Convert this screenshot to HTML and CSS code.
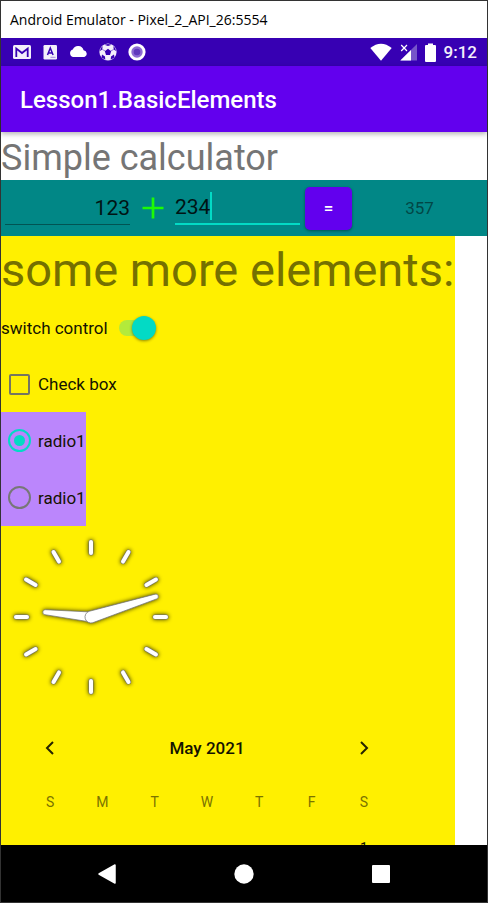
FILE: index.html
```html
<!DOCTYPE html>
<html lang="en">
<head>
<meta charset="utf-8">
<meta name="viewport" content="width=device-width, initial-scale=1">
<title>Android Emulator - Pixel_2_API_26:5554</title>
<link rel="stylesheet" href="styles.css">
</head>
<body>
<div class="window">
  <div class="window-title">Android Emulator - Pixel_2_API_26:5554</div>

  <div class="status-bar">
    <div class="notifications">
      <svg width="18" height="16" viewBox="0 0 18 16"><rect y="1" width="18" height="14" rx="1.5" fill="#f3effb"/><path d="M3.300 13V4.500L9 9l5.700-4.500V13" fill="none" stroke="#3700b3" stroke-width="1.800"/></svg>
      <svg width="16" height="16" viewBox="-1.500 0 16 16"><rect y="1" width="13.500" height="14.500" rx="1.200" fill="#f3effb"/><path d="M4 11l2.800-7L9.600 11M5 8.900h3.700" fill="none" stroke="#3700b3" stroke-width="1.500"/><path d="M7 13.300h5" stroke="#a58bdc"/></svg>
      <svg width="19" height="16" viewBox="0 0 19 16"><path d="M4 13A3.900 3.900 0 0 1 3.800 5.500 5.700 5.700 0 0 1 14.600 6.200 3.500 3.500 0 0 1 15.300 13z" fill="#fff"/></svg>
      <svg width="18" height="18" viewBox="0 0 18 18"><circle cx="9" cy="9" r="8.600" fill="#f3effb"/><g fill="#3700b3"><path d="M9 5.800l3.200 2.400L11 12H7L5.800 8.200z"/><path d="M5.300 1.700L9 3l3.700-1.300L9 .9zM1 8l2.300-1.500L3.600 3 1.700 5.200zM17 8l-2.300-1.500L14.400 3l1.900 2.200zM2.500 14.500l.5-3 3 2 .3 3.200zM15.500 14.500l-.5-3-3 2-.3 3.200z"/></g><path d="M3.300 6.500l3 1.500M14.700 6.500l-3 1.500" fill="none" stroke="#3700b3" stroke-width=".5"/></svg>
      <svg width="18" height="18" viewBox="0 0 18 18"><circle cx="9" cy="9" r="8.600" fill="#fff"/><circle cx="9" cy="9" r="5.700" fill="#8c6ad3"/><circle cx="9" cy="9" r="3.300" fill="#6039bd"/></svg>
    </div>
    <div class="indicators">
      <svg width="22" height="18" viewBox="0 0 22 18"><path d="M.3 5Q11-3.500 21.700 5L11 17.700z" fill="#fff"/></svg>
      <svg width="17" height="18" viewBox="0 0 17 18"><path d="M17 1v16.500H.3z" fill="#7655c9"/><path d="M11 7v10.500H.3z" fill="#fff"/><path d="M0 0h8.500v8.500L7 10H0z" fill="#3700b3"/><path d="M1.200 2l5.800 6M7 2L1.200 8" stroke="#fff" stroke-width="1.200"/></svg>
      <svg width="11" height="19" viewBox="0 0 11 19"><path d="M3 .5h5V2h2a1 1 0 0 1 1 1v15a1 1 0 0 1-1 1H1a1 1 0 0 1-1-1V3a1 1 0 0 1 1-1h2z" fill="#fff"/></svg>
      <span class="time">9:12</span>
    </div>
  </div>

  <header class="app-bar"><h1>Lesson1.BasicElements</h1></header>

  <main class="content">
    <h2 class="calc-title">Simple calculator</h2>
    <form class="calculator">
      <div class="field"><input class="first" type="text" value="123" aria-label="First number"></div>
      <svg class="plus" width="22" height="22" viewBox="0 0 22 22"><path d="M11 .5v21M.5 11h21" stroke="#1dfb04" stroke-width="2.700"/></svg>
      <div class="field"><input class="second" type="text" value="234" aria-label="Second number"><span class="caret"></span></div>
      <button class="equals" type="button">=</button>
      <output class="result">357</output>
    </form>

    <section class="panel">
      <h2 class="panel-title">some more elements:</h2>
      <label class="row switch-row">switch control <input class="switch" type="checkbox" role="switch" checked></label>
      <label class="row option"><input class="check" type="checkbox"> Check box</label>
      <div class="radio-group" role="radiogroup">
        <label class="row option"><input class="radio" type="radio" name="choice" checked> radio1</label>
        <label class="row option"><input class="radio" type="radio" name="choice"> radio1</label>
      </div>

      <svg class="clock" width="180" height="182" viewBox="-90 -91 180 182">
        <defs>
          <path id="tick" d="M0-75v11"/>
          <g id="dial"><use href="#tick"/><use href="#tick" transform="rotate(30)"/><use href="#tick" transform="rotate(60)"/><use href="#tick" transform="rotate(90)"/><use href="#tick" transform="rotate(120)"/><use href="#tick" transform="rotate(150)"/><use href="#tick" transform="rotate(180)"/><use href="#tick" transform="rotate(210)"/><use href="#tick" transform="rotate(240)"/><use href="#tick" transform="rotate(270)"/><use href="#tick" transform="rotate(300)"/><use href="#tick" transform="rotate(330)"/></g>
        </defs>
        <use class="ticks-edge" href="#dial"/>
        <use class="ticks" href="#dial"/>
        <path class="hand" transform="rotate(276)" d="M-5 0L-2.500-46a2.500 2.500 0 0 1 5 0L5 0A5 5 0 0 1-5 0z"/>
        <path class="hand" transform="rotate(72.500)" d="M-6 0L-2.500-68a2.500 2.500 0 0 1 5 0L6 0A6 6 0 0 1-6 0z"/>
      </svg>

      <div class="calendar">
        <div class="month-bar">
          <button type="button" aria-label="Previous month"><svg width="10" height="14" viewBox="0 0 10 14"><path d="M8 1L2 7l6 6" fill="none" stroke="#262400" stroke-width="2"/></svg></button>
          <span class="month">May 2021</span>
          <button type="button" aria-label="Next month"><svg width="10" height="14" viewBox="0 0 10 14"><path d="M2 1l6 6-6 6" fill="none" stroke="#262400" stroke-width="2"/></svg></button>
        </div>
        <table>
          <thead><tr><th>S</th><th>M</th><th>T</th><th>W</th><th>T</th><th>F</th><th>S</th></tr></thead>
          <tbody><tr><td></td><td></td><td></td><td></td><td></td><td></td><td>1</td></tr></tbody>
        </table>
      </div>
    </section>
  </main>

  <nav class="nav-bar">
    <button type="button" aria-label="Back"><svg width="20" height="20" viewBox="0 0 20 20"><path d="M18 1v18L2 10z" fill="#fff" stroke="#fff" stroke-width="1.500" stroke-linejoin="round"/></svg></button>
    <button type="button" aria-label="Home"><svg width="20" height="20" viewBox="0 0 20 20"><circle cx="10" cy="10" r="9.700" fill="#fff"/></svg></button>
    <button type="button" aria-label="Overview"><svg width="20" height="20" viewBox="0 0 20 20"><rect x="1" y="1" width="18" height="18" rx="1" fill="#fff"/></svg></button>
  </nav>
</div>
</body>
</html>
```
FILE: styles.css
```css
* { box-sizing: border-box; }

body {
  margin: 0;
  font-family: Roboto, "Noto Sans", sans-serif;
  font-size: 17px;
  color: #141300;
}

h1, h2 { margin: 0; font-weight: 400; }

button {
  padding: 0;
  border: 0;
  background: none;
  font: inherit;
}

svg { display: block; }

.window {
  display: flex;
  flex-direction: column;
  height: 100vh;
  border: 1px solid #333;
  background: #fff;
}

.window-title {
  padding: 0 9px;
  font-family: "Open Sans", "Noto Sans", sans-serif;
  font-size: 14px;
  line-height: 37px;
  color: #000;
}

/* Status bar */
.status-bar {
  display: flex;
  justify-content: space-between;
  align-items: center;
  height: 28px;
  padding: 0 10px 0 12px;
  background: #3700b3;
}

.notifications, .indicators { display: flex; align-items: center; }
.notifications { gap: 11px; }
.indicators { gap: 8px; }

.time {
  font-weight: 500;
  color: #f3effb;
}

.app-bar {
  position: relative;
  padding: 2px 19px 0;
  background: #6200ee;
  box-shadow: 0 2px 5px rgba(0, 0, 0, .3);
}

.app-bar h1 {
  font-size: 24px;
  font-weight: 500;
  line-height: 64px;
  color: #fff;
}

.content {
  flex: 1;
  min-height: 0;
  overflow: hidden;
}

/* Calculator */
.calc-title {
  padding-top: 4px;
  font-size: 36px;
  line-height: 44px;
  color: #757575;
}

.calculator {
  display: grid;
  grid-template-columns: minmax(0, 133fr) 37px minmax(0, 133fr) 48px minmax(0, 135fr);
  align-items: center;
  height: 56px;
  background: #018786;
}

.field { position: relative; padding: 0 4px; }

.field input {
  display: block;
  width: 100%;
  height: 34px;
  padding: 0;
  border: 0;
  border-radius: 0;
  outline: 0;
  background: none;
  font: inherit;
  font-size: 21px;
  color: #001414;
}

.field .first { text-align: right; border-bottom: 1px solid #015453; }
.field .second { border-bottom: 2px solid #03dac5; }

.caret {
  position: absolute;
  top: 1px;
  left: 39px;
  width: 2px;
  height: 28px;
  background: #03dac5;
}

.plus { justify-self: center; }

.equals {
  height: 43px;
  margin-left: 1px;
  border-radius: 5px;
  background: #6200ee;
  box-shadow: 0 1px 3px rgba(0, 0, 0, .4);
  font-weight: 500;
  color: #fff;
}

.result { text-align: center; color: #014746; }

/* Controls */
.panel {
  width: fit-content;
  padding-right: 1px;
  background: #fff000;
}

.panel-title {
  padding-top: 4px;
  font-size: 47px;
  line-height: 60px;
  color: #757000;
}

.row {
  display: flex;
  align-items: center;
  height: 56px;
}

.option { gap: 7px; padding-left: 7px; }

.row input { appearance: none; margin: 0; }

.switch-row { gap: 11px; }

.switch {
  position: relative;
  width: 37px;
  height: 24px;
}

.switch::before {
  content: "";
  position: absolute;
  inset: 4px 4px 4px 0;
  border-radius: 8px;
  background: #b3ea3b;
}

.switch::after {
  content: "";
  position: absolute;
  top: 0;
  right: 0;
  width: 24px;
  height: 24px;
  border-radius: 50%;
  background: #03dac5;
  box-shadow: 0 1px 3px rgba(0, 0, 0, .45);
}

.row .check {
  width: 21px;
  height: 21px;
  margin: 0 1px;
  border: 2px solid #757561;
  border-radius: 2px;
}

.radio-group {
  width: fit-content;
  background: #bb86fc;
}

.radio-group .row { height: 57px; }

.radio {
  display: grid;
  place-items: center;
  width: 23px;
  height: 23px;
  border: 2px solid #777;
  border-radius: 50%;
}

.radio:checked { border-color: #03dac5; }

.radio:checked::before {
  content: "";
  width: 11px;
  height: 11px;
  border-radius: 50%;
  background: #03dac5;
}

/* Clock */
.clock { filter: drop-shadow(0 0 2px rgba(0, 0, 0, .8)); }
.ticks-edge { stroke: #777; stroke-width: 5; stroke-linecap: round; }
.ticks { stroke: #fff; stroke-width: 4; stroke-linecap: round; }
.hand { fill: #fff; stroke: #777; stroke-width: .7; }

/* Calendar */
.calendar {
  width: 366px;
  margin-left: 23px;
}

.month-bar {
  display: flex;
  justify-content: space-between;
  align-items: center;
  height: 80px;
}

.month-bar button {
  display: grid;
  place-items: center;
  width: 52px;
  height: 52px;
}

.month { font-weight: 500; }

.calendar table {
  width: 100%;
  table-layout: fixed;
  border-collapse: collapse;
  text-align: center;
}

.calendar th, .calendar td { padding: 0; }

.calendar th {
  height: 28px;
  font-size: 14px;
  font-weight: 400;
  color: #7a7300;
}

.calendar td {
  height: 64px;
  font-size: 14px;
}

/* System navigation */
.nav-bar {
  display: grid;
  grid-template-columns: repeat(3, 1fr);
  height: 57px;
  padding: 0 38px;
  background: #000;
}

.nav-bar button { display: grid; place-items: center; }
```
